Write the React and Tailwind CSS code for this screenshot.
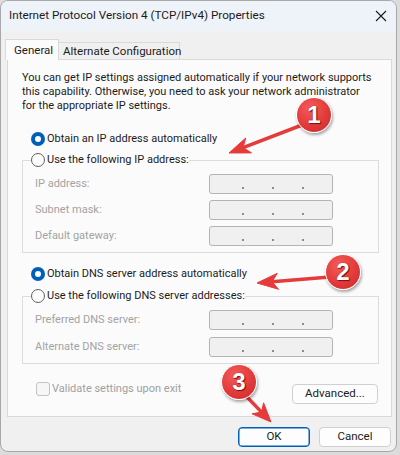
import React from "react";

const font = "font-['Segoe_UI',Roboto,sans-serif]";

function arrowShape(x1, y1, x2, y2, len = 20, half = 8) {
    const dx = x2 - x1;
    const dy = y2 - y1;
    const L = Math.hypot(dx, dy);
    const ux = dx / L;
    const uy = dy / L;
    const nx = -uy;
    const ny = ux;
    const bx = x2 - ux * len;
    const by = y2 - uy * len;
    const ix = x2 - ux * len * 0.72;
    const iy = y2 - uy * len * 0.72;
    const head = [
        [x2, y2],
        [bx + nx * half, by + ny * half],
        [ix, iy],
        [bx - nx * half, by - ny * half],
    ]
        .map((p) => p.map((v) => v.toFixed(1)).join(","))
        .join(" ");
    return { head, sx: ix, sy: iy };
}

const Arrow = ({ x1, y1, x2, y2, len, half }) => {
    const a = arrowShape(x1, y1, x2, y2, len, half);
    return (
        <g>
            <line x1={x1} y1={y1} x2={a.sx} y2={a.sy} stroke="#e63b3b" strokeWidth="3.5" strokeLinecap="round" />
            <polygon points={a.head} fill="#e63b3b" stroke="#e63b3b" strokeWidth="1" strokeLinejoin="round" />
        </g>
    );
};

const Badge = ({ n, className }) => (
    <div
        className={`absolute w-[36px] h-[36px] rounded-full border-[1.5px] border-white bg-[radial-gradient(circle_at_38%_30%,#f45b5b,#e23a3a_55%,#c92a2a)] shadow-[1px_2px_3px_rgba(0,0,0,0.35)] flex items-center justify-center ${className}`}
    >
        <span className="text-white text-[24px] font-bold leading-none font-['Liberation_Sans',Arial,sans-serif] [text-shadow:0_0_1px_#7a1010,1px_1px_1px_#7a1010]">
            {n}
        </span>
    </div>
);

const Radio = ({ checked, label, disabled }) => (
    <div className="flex items-center h-[20px] gap-[2px]">
        {checked ? (
            <span className="w-[14px] h-[14px] rounded-full bg-[#005fb8] flex items-center justify-center">
                <span className="w-[6px] h-[6px] rounded-full bg-white" />
            </span>
        ) : (
            <span className="w-[14px] h-[14px] rounded-full border border-[#616161] bg-[#fbfbfb]" />
        )}
        <span className={`text-[11px] whitespace-nowrap ${disabled ? "text-[#a0a0a0]" : "text-[#1b1b1b]"}`}>{label}</span>
    </div>
);

const IpField = ({ label }) => (
    <div className="flex items-center h-[20px] pl-[4px]">
        <span className="w-[174px] text-[11px] text-[#a3a3a3] whitespace-nowrap">{label}</span>
        <div className="w-[124px] h-[20px] rounded-[3px] border border-[#b4b4b4] bg-[#f0f0f0] flex pl-[32px] gap-[28px]">
            <span className="w-[2px] h-[2px] mt-[12px] bg-[#8c8c8c]" />
            <span className="w-[2px] h-[2px] mt-[12px] bg-[#8c8c8c]" />
            <span className="w-[2px] h-[2px] mt-[12px] bg-[#8c8c8c]" />
        </div>
    </div>
);

const Button = ({ children, primary, className = "" }) => (
    <button
        className={`h-[20px] rounded-[4px] bg-[#fdfdfd] text-[11.5px] text-[#1b1b1b] flex items-center justify-center ${
            primary ? "border border-[#005fb8] shadow-[inset_0_0_0_0.5px_#005fb8]" : "border border-[#d0d0d0]"
        } ${className}`}
    >
        {children}
    </button>
);

export default function App() {
    return (
        <div className={`relative w-[400px] h-[455px] bg-[#dcdcdc] overflow-hidden ${font}`}>
            <div className="w-[397px] h-[452px] bg-[#f0f0f0] border border-[#a8a8a8] rounded-[8px] overflow-hidden flex flex-col">
                {/* title bar */}
                <div className="h-[30px] shrink-0 bg-[#eef2f9] flex items-center justify-between pl-[8px] pr-[8px]">
                    <span className="text-[11.7px] text-[#1b1b1b] whitespace-nowrap">Internet Protocol Version 4 (TCP/IPv4) Properties</span>
                    <svg width="12" height="12" viewBox="0 0 12 12" className="mr-[1px] mb-[1px]">
                        <path d="M1 1 L11 11 M11 1 L1 11" stroke="#1b1b1b" strokeWidth="1.1" />
                    </svg>
                </div>

                {/* tabs */}
                <div className="flex items-end pl-[4px] mt-[8px] h-[20px] relative z-10">
                    <div className="w-[54px] h-[21px] -mb-px bg-[#fbfbfb] border border-b-0 border-[#d9d9d9] text-[11.5px] text-[#1b1b1b] pl-[8px] pt-[2px]">
                        General
                    </div>
                    <div className="w-[121px] h-[17px] bg-[#f0f0f0] border border-l-0 border-b-0 border-[#d9d9d9] text-[11.5px] text-[#1b1b1b] pl-[4px] leading-[17px] whitespace-nowrap">
                        Alternate Configuration
                    </div>
                </div>

                {/* tab panel */}
                <div className="ml-[6px] w-[385px] h-[358px] bg-[#fbfbfb] border border-[#d9d9d9] pl-[14px] pt-[11px] flex flex-col">
                    <p className="text-[11px] leading-[14px] text-[#1b1b1b] whitespace-nowrap">
                        You can get IP settings assigned automatically if your network supports
                        <br />
                        this capability. Otherwise, you need to ask your network administrator
                        <br />
                        for the appropriate IP settings.
                    </p>

                    <div className="pl-[9px] mt-[16px]">
                        <Radio checked label="Obtain an IP address automatically" />
                    </div>
                    <fieldset className="w-[357px] mt-[1px] border border-[#dcdcdc] pl-[8px] pt-[4px] pb-[6px] flex flex-col gap-[6px]">
                        <legend className="p-0">
                            <Radio label="Use the following IP address:" />
                        </legend>
                        <IpField label="IP address:" />
                        <IpField label="Subnet mask:" />
                        <IpField label="Default gateway:" />
                    </fieldset>

                    <div className="pl-[9px] mt-[11px]">
                        <Radio checked label="Obtain DNS server address automatically" />
                    </div>
                    <fieldset className="w-[357px] mt-[2px] border border-[#dcdcdc] pl-[8px] pt-[4px] pb-[6px] flex flex-col gap-[7px]">
                        <legend className="p-0">
                            <Radio label="Use the following DNS server addresses:" />
                        </legend>
                        <IpField label="Preferred DNS server:" />
                        <IpField label="Alternate DNS server:" />
                    </fieldset>

                    <div className="w-[357px] mt-[17px] flex justify-between items-start pl-[14px] pr-[1px]">
                        <div className="flex items-center h-[16px] gap-[2px]">
                            <span className="w-[14px] h-[14px] rounded-[3px] border border-[#c4c4c4] bg-[#f6f6f6]" />
                            <span className="text-[11px] text-[#a0a0a0] whitespace-nowrap">Validate settings upon exit</span>
                        </div>
                        <Button className="w-[86px] mt-[3px]">Advanced...</Button>
                    </div>
                </div>

                {/* dialog buttons */}
                <div className="flex justify-end gap-[9px] pr-[5px] mt-[10px]">
                    <Button primary className="w-[72px]">OK</Button>
                    <Button className="w-[72px]">Cancel</Button>
                </div>
            </div>

            {/* annotations */}
            <svg className="absolute inset-0 pointer-events-none" width="400" height="455" viewBox="0 0 400 455">
                <Arrow x1={302} y1={125} x2={229} y2={153} len={21} half={8} />
                <Arrow x1={330} y1={277} x2={257} y2={283} len={21} half={8} />
                <Arrow x1={246} y1={396} x2={271} y2={422} len={19} half={8} />
            </svg>
            <Badge n="1" className="left-[296px] top-[97px]" />
            <Badge n="2" className="left-[325px] top-[254px]" />
            <Badge n="3" className="left-[221px] top-[364px]" />
        </div>
    );
}
